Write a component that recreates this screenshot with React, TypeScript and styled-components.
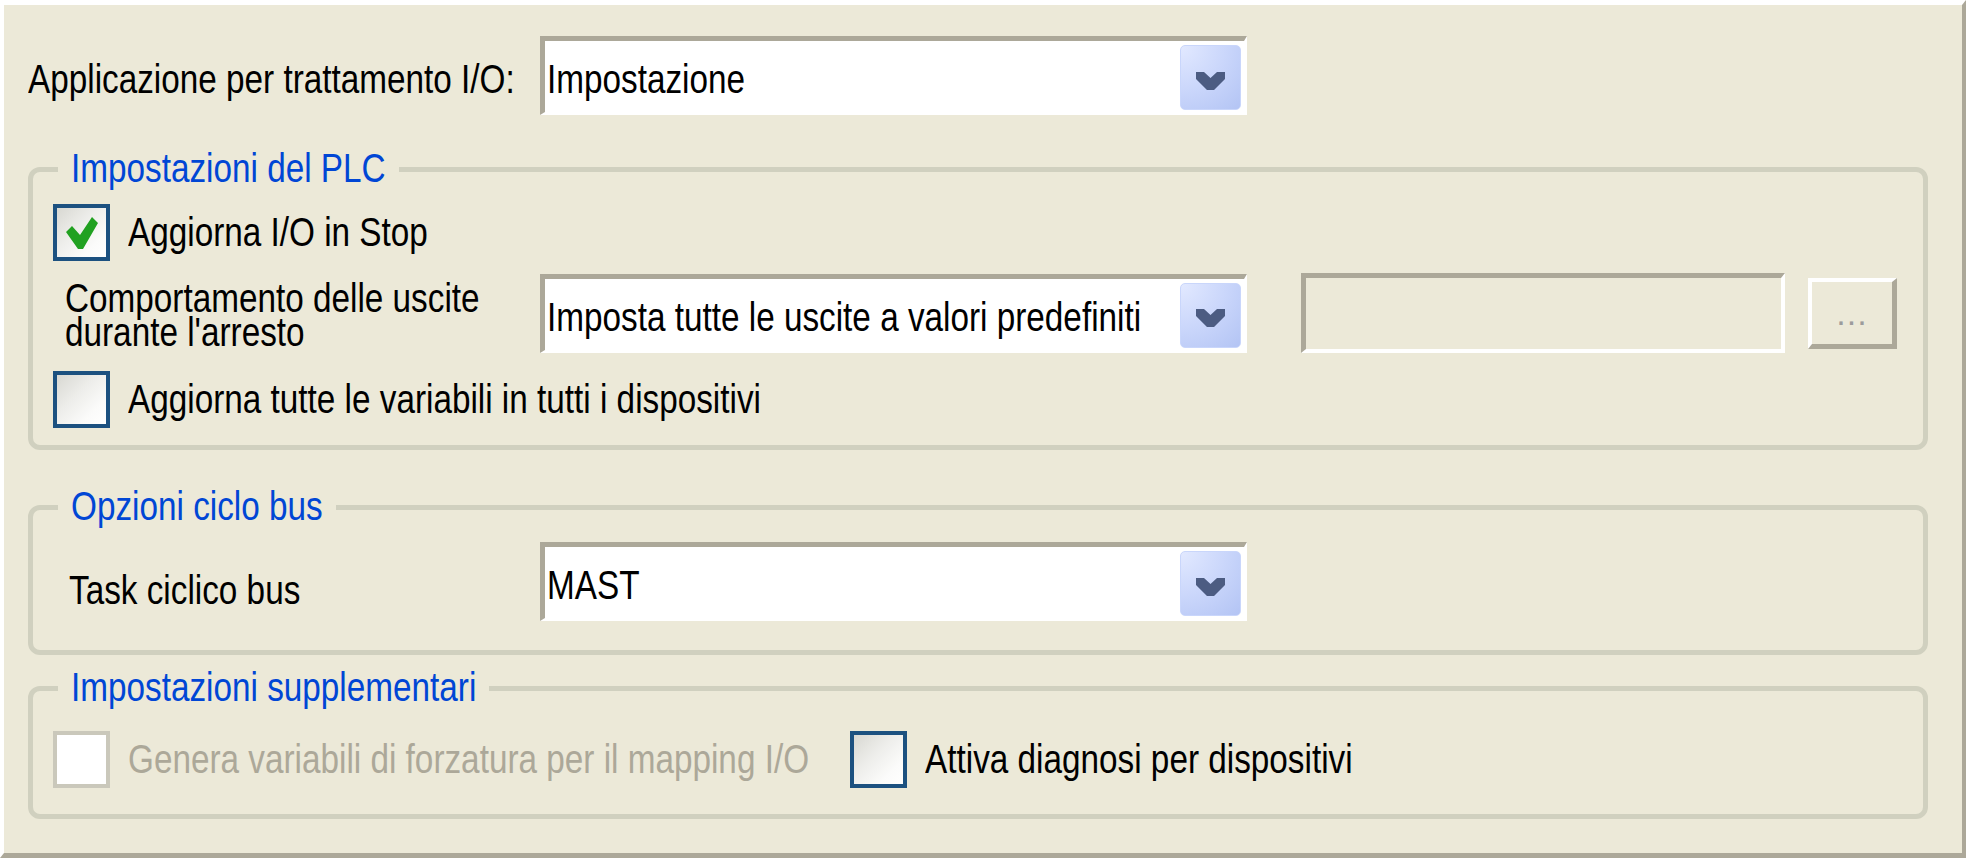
import React from 'react';
import styled, { createGlobalStyle } from 'styled-components';

const GlobalStyle = createGlobalStyle`
  html, body {
    margin : 0;
    padding : 0;
    background : #fff;
  }
  body {
    font-family : "Liberation Sans", Arial, sans-serif;
  }
`

// il font di riferimento e' condensato: font piu' piccolo + scaleY per l'altezza
const Narrow = styled.span`
  display : inline-block;
  white-space : nowrap;
  transform : scaleY(1.212);
  transform-origin : center;
`

const Panel = styled.div`
  box-sizing : border-box;
  width : 1966px;
  height : 858px;
  background : #ece9d8;
  border-style : solid;
  border-width : 5px 4px 5px 4px;
  border-color : #fff #aca899 #aca899 #fff;
  padding : 31px 34px 0 24px;
  font-size : 33.3px;
  color : #000;
`

const Row = styled.div<{ $top?: number }>`
  display : flex;
  align-items : center;
  margin-top : ${(p) => p.$top || 0}px;
`

const FieldLabel = styled.div<{ $width: number; $indent?: number; $drop?: number }>`
  box-sizing : border-box;
  width : ${(p) => p.$width}px;
  padding-left : ${(p) => p.$indent || 0}px;
  margin-top : ${(p) => p.$drop || 0}px;
  line-height : 28px;
  flex-shrink : 0;
  white-space : nowrap;
  transform : scaleY(1.212);
  transform-origin : center;
`

// combo a tendina stile XP
const Combo = styled.div`
  box-sizing : border-box;
  width : 707px;
  height : 79px;
  display : flex;
  align-items : center;
  background : #fff;
  border-style : solid;
  border-width : 5px 3px 3px 5px;
  border-color : #aca899 #fff #fff #aca899;
  padding : 0 3px 0 2px;
`

const ComboValue = styled.div`
  flex : 1;
  white-space : nowrap;
  overflow : hidden;
  padding-top : 5px;
  transform : scaleY(1.212);
`

const ComboButton = styled.div`
  box-sizing : border-box;
  width : 61px;
  height : 65px;
  border-radius : 5px;
  border : 1px solid #c9d6fb;
  background : radial-gradient(circle at 0% 0%, #e2e9ff 0%, #cbd7fb 50%, #b3c4f4 100%);
  display : flex;
  align-items : center;
  justify-content : center;
  padding-top : 6px;
  margin-top : 2px;
`

const Group = styled.fieldset<{ $top: number; $pt: number; $pb: number }>`
  margin : ${(p) => p.$top}px 0 0 0;
  border : 5px solid #d0d0bf;
  border-radius : 12px;
  padding : ${(p) => p.$pt}px 0 ${(p) => p.$pb}px 20px;
  min-width : 0;
`

const Legend = styled.legend`
  color : #0046d5;
  line-height : 44px;
  padding : 0 13px;
  margin-left : 5px;
`

const CheckItem = styled.label`
  display : flex;
  align-items : center;
  gap : 18px;
  margin-right : 41px;
`

const CheckBox = styled.span<{ $disabled?: boolean }>`
  box-sizing : border-box;
  display : block;
  width : 57px;
  height : 57px;
  flex-shrink : 0;
  border : 4px solid ${(p) => (p.$disabled ? '#cac8bb' : '#1c5180')};
  background : ${(p) =>
    p.$disabled ? '#fff' : 'linear-gradient(135deg, #d8d8d2 0%, #ededea 40%, #fbfbfa 75%, #fff 100%)'};
  position : relative;
`

const CheckMark = styled.svg`
  position : absolute;
  left : -4px;
  top : -4px;
`

const CheckText = styled(Narrow)<{ $disabled?: boolean }>`
  color : ${(p) => (p.$disabled ? '#aca899' : '#000')};
`

const TextField = styled.div`
  box-sizing : border-box;
  width : 484px;
  height : 80px;
  margin-left : 54px;
  border-style : solid;
  border-width : 5px 4px 4px 5px;
  border-color : #aca899 #fff #fff #aca899;
  background : #ece9d8;
`

const BrowseButton = styled.div`
  box-sizing : border-box;
  width : 89px;
  height : 71px;
  margin-left : 23px;
  border-style : solid;
  border-width : 4px 5px 5px 4px;
  border-color : #fff #aca899 #aca899 #fff;
  display : flex;
  align-items : center;
  justify-content : center;
  font-size : 34px;
  letter-spacing : 1px;
  color : #9c9c9c;
  padding-top : 2px;
`

const Chevron = () => (
  <svg width="29" height="18" viewBox="0 0 29 18">
    <path d="M0 0 H8 L14.5 6 L21 0 H29 V7 L18 18 H11 L0 7 Z" fill="#4c5c82" />
  </svg>
)

const Select = ({ value }: { value: string }) => (
  <Combo>
    <ComboValue>{value}</ComboValue>
    <ComboButton>
      <Chevron />
    </ComboButton>
  </Combo>
)

const Check = ({
  label,
  checked,
  disabled,
}: {
  label: string;
  checked?: boolean;
  disabled?: boolean;
}) => (
  <CheckItem>
    <CheckBox $disabled={disabled}>
      {checked && (
        <CheckMark width="57" height="57" viewBox="0 0 57 57">
          <path d="M13 28 L19 22 L27 31 L39 13 L45 19 L30 45 L25 45 Z" fill="#21a121" />
        </CheckMark>
      )}
    </CheckBox>
    <CheckText $disabled={disabled}>{label}</CheckText>
  </CheckItem>
)

const App = () => {
  return (
    <>
      <GlobalStyle />
      <Panel>
        <Row>
          <FieldLabel $width={512} $drop={8}>Applicazione per trattamento I/O:</FieldLabel>
          <Select value="Impostazione" />
        </Row>

        <Group $top={32} $pt={13} $pb={17}>
          <Legend>
            <Narrow>Impostazioni del PLC</Narrow>
          </Legend>
          <Row>
            <Check label="Aggiorna I/O in Stop" checked />
          </Row>
          <Row $top={12}>
            <FieldLabel $width={487} $indent={12} $drop={5}>
              Comportamento delle uscite
              <br />
              durante l'arresto
            </FieldLabel>
            <Select value="Imposta tutte le uscite a valori predefiniti" />
            <TextField />
            <BrowseButton>...</BrowseButton>
          </Row>
          <Row $top={18}>
            <Check label="Aggiorna tutte le variabili in tutti i dispositivi" />
          </Row>
        </Group>

        <Group $top={35} $pt={13} $pb={29}>
          <Legend>
            <Narrow>Opzioni ciclo bus</Narrow>
          </Legend>
          <Row>
            <FieldLabel $width={487} $indent={16} $drop={18}>Task ciclico bus</FieldLabel>
            <Select value="MAST" />
          </Row>
        </Group>

        <Group $top={11} $pt={21} $pb={26}>
          <Legend>
            <Narrow>Impostazioni supplementari</Narrow>
          </Legend>
          <Row>
            <Check label="Genera variabili di forzatura per il mapping I/O" disabled />
            <Check label="Attiva diagnosi per dispositivi" />
          </Row>
        </Group>
      </Panel>
    </>
  );
};

export default App;
